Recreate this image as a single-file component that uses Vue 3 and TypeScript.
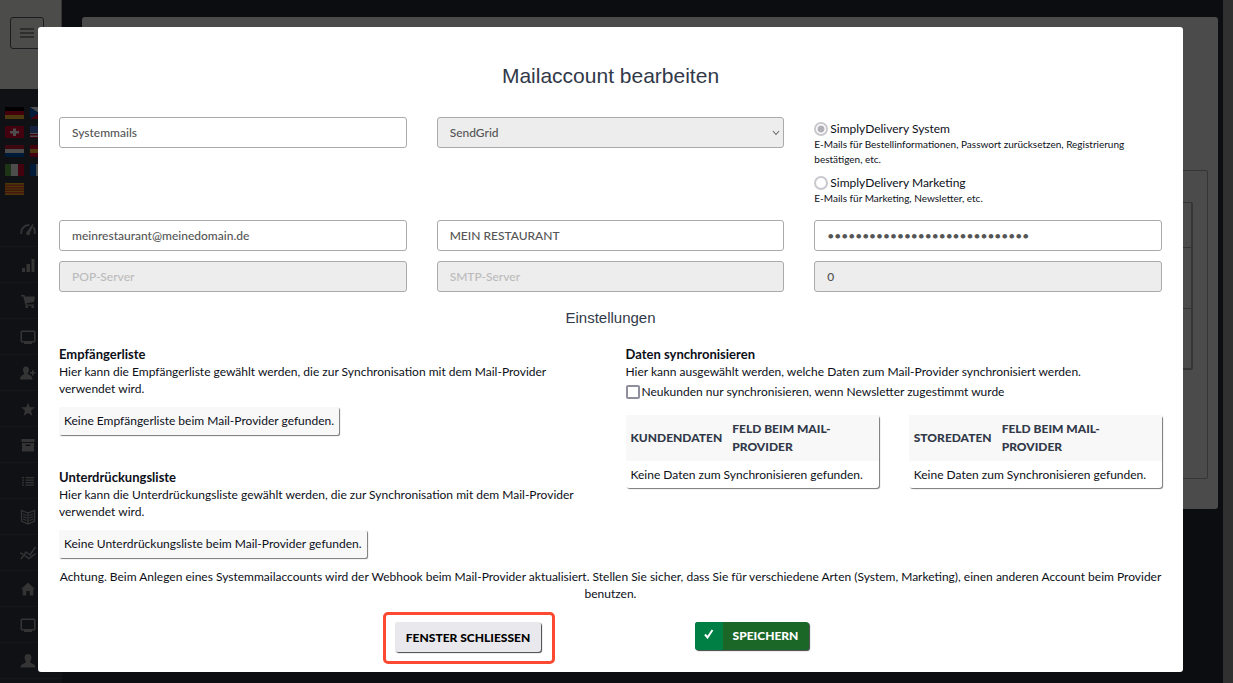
<script setup lang="ts">
import { ref } from 'vue'

interface Row { height: number }

const name = ref('Systemmails')
const provider = ref('SendGrid')
const kind = ref('system')
const email = ref('meinrestaurant@meinedomain.de')
const sender = ref('MEIN RESTAURANT')
const password = ref('x'.repeat(29))
const port = ref('0')
const onlyNewsletter = ref(false)

const kinds = [
  { id: 'system', label: 'SimplyDelivery System', hint: 'E-Mails für Bestellinformationen, Passwort zurücksetzen, Registrierung bestätigen, etc.' },
  { id: 'marketing', label: 'SimplyDelivery Marketing', hint: 'E-Mails für Marketing, Newsletter, etc.' },
]

const lists = [
  {
    title: 'Empfängerliste',
    text: 'Hier kann die Empfängerliste gewählt werden, die zur Synchronisation mit dem Mail-Provider verwendet wird.',
    empty: 'Keine Empfängerliste beim Mail-Provider gefunden.',
  },
  {
    title: 'Unterdrückungsliste',
    text: 'Hier kann die Unterdrückungsliste gewählt werden, die zur Synchronisation mit dem Mail-Provider verwendet wird.',
    empty: 'Keine Unterdrückungsliste beim Mail-Provider gefunden.',
  },
]

const tables = ['Kundendaten', 'Storedaten']
const rows: Row[] = [{ height: 44 }, { height: 61 }, { height: 60 }]
const nav = ['gauge', 'bars', 'cart', 'screen', 'adduser', 'star', 'archive', 'list', 'book', 'chart', 'home', 'screen', 'user']
const flags = ['de', 'cz', 'ch', 'us', 'nl', 'es', 'it', 'fr', 'ct']
</script>

<template>
  <div class="app">
    <aside class="sidebar">
      <div class="brand">
        <button class="burger" type="button" aria-label="Menü"><i></i><i></i><i></i></button>
      </div>
      <div class="flags">
        <svg v-for="f in flags" :key="f" class="flag" viewBox="0 0 19 12" preserveAspectRatio="none">
          <template v-if="f === 'de'">
            <path fill="#000" d="M0 0h19v4H0z" /><path fill="#43000a" d="M0 4h19v4H0z" /><path fill="#4d3a10" d="M0 8h19v4H0z" />
          </template>
          <template v-else-if="f === 'cz'">
            <path fill="#4d4d4d" d="M0 0h19v6H0z" /><path fill="#43000f" d="M0 6h19v6H0z" /><path fill="#001a3a" d="M0 0l9 6-9 6z" />
          </template>
          <template v-else-if="f === 'ch'">
            <path fill="#43000f" d="M0 0h19v12H0z" /><path fill="#4d4d4d" d="M8 2.500h3V5h3v2.500h-3V10H8V7.500H5V5h3z" />
          </template>
          <template v-else-if="f === 'us'">
            <path fill="#4d4d4d" d="M0 0h19v12H0z" /><path fill="#3d000f" d="M0 0h19v2H0zM0 4h19v2H0zM0 8h19v1.500H0zM0 11h19v1H0z" /><path fill="#16203f" d="M0 0h9v7H0z" />
          </template>
          <template v-else-if="f === 'nl'">
            <path fill="#3d0810" d="M0 0h19v4H0z" /><path fill="#4d4d4d" d="M0 4h19v4H0z" /><path fill="#001a3a" d="M0 8h19v4H0z" />
          </template>
          <template v-else-if="f === 'es'">
            <path fill="#43000f" d="M0 0h19v12H0z" /><path fill="#4d3a10" d="M0 4h19v4H0z" />
          </template>
          <template v-else-if="f === 'it'">
            <path fill="#1d3516" d="M0 0h6v12H0z" /><path fill="#4d4d4d" d="M6 0h7v12H6z" /><path fill="#43000f" d="M13 0h6v12h-6z" />
          </template>
          <template v-else-if="f === 'fr'">
            <path fill="#001a3a" d="M0 0h6v12H0z" /><path fill="#4d4d4d" d="M6 0h7v12H6z" /><path fill="#43000f" d="M13 0h6v12h-6z" />
          </template>
          <template v-else>
            <path fill="#4d3608" d="M0 0h19v12H0z" /><path fill="#45180f" d="M0 1.500h19V3H0zM0 4h19v1.500H0zM0 6.500h19V8H0zM0 9h19v1.500H0z" />
          </template>
        </svg>
      </div>
      <nav class="nav">
        <a v-for="(n, i) in nav" :key="i" href="#" :aria-label="n">
          <svg viewBox="0 0 16 16" fill="#343434">
            <g v-if="n === 'gauge'"><path fill="none" stroke="#343434" stroke-width="1.800" d="M1.300 13c-.6-5 2.700-9 8-9.200M13.300 6c1.400 1.800 1.800 4.300 1.300 7" /><path d="M12.500 3l1 .5-3.600 8.700a1.900 1.900 0 1 1-3-1.400z" /></g>
            <path v-else-if="n === 'bars'" d="M2 11h3v4H2zM6.500 7h3.500v8H6.500zM11.500 2h3v13h-3z" />
            <path v-else-if="n === 'cart'" d="M1 2h3.500l.6 1.600H15l-1 5.400-7.500 1.200.3 1.200H14v1.400H5.500L3.300 3.500H1zM5.500 13h2.500v2H5.500zM11.500 13H14v2h-2.500z" />
            <path v-else-if="n === 'screen'" fill-rule="evenodd" d="M2 1.500h12a1.500 1.500 0 0 1 1.500 1.500v9a1.500 1.500 0 0 1-1.500 1.500h-2V15H4v-1.500H2A1.500 1.500 0 0 1 .5 12V3A1.500 1.500 0 0 1 2 1.500zM2 3v9h12V3z" />
            <path v-else-if="n === 'adduser'" d="M6 1.500c2.200 0 3 1.500 3 3.300S8 8 7.700 8.600c0 1.400 4.800 1.600 4.800 5.900H0c0-4.300 4.300-4.500 4.300-5.900C3.900 8 3 6.500 3 4.800s.8-3.300 3-3.300zM12 5h1.500v2h2v1.500h-2v2H12v-2h-2V7h2z" />
            <path v-else-if="n === 'star'" d="M8 1.500l1.800 4.800h5L11 9.500l1.300 5.200L8 12l-4.300 2.700L5 9.500 1.200 6.300h5z" />
            <path v-else-if="n === 'archive'" fill-rule="evenodd" d="M1.500 2h13v3h-13zM2 6h12v8.500H2zm3.500 1.500V9h5V7.500z" />
            <path v-else-if="n === 'list'" d="M2 4h2v1.300H2zM5.500 4H14v1.300H5.500zM2 6.500h2v1.300H2zM5.500 6.500H14v1.300H5.500zM2 9h2v1.300H2zM5.500 9H14v1.300H5.500zM2 11.500h2v1.300H2zM5.500 11.500H14v1.300H5.500z" />
            <g v-else-if="n === 'book'" fill="none" stroke="#343434" stroke-width="1.300"><path d="M8 4L1.500 1.500v10.500L8 15l6.500-3V1.500zM8 4v11M3 5l3.500 1.500M3 7.500L6.500 9M3 10l3.500 1.500M13 5L9.500 6.500M13 7.500L9.500 9M13 10l-3.500 1.500" /></g>
            <g v-else-if="n === 'chart'" fill="none" stroke="#343434" stroke-width="1.500"><path d="M1 14l5-7 4 3 5.500-8M0 8l3 1M4.500 10.500L9 13.500l6.500-5" /></g>
            <path v-else-if="n === 'home'" d="M8 1.500l7 6.800h-1.700V14.500H9.700V10H6.300v4.500H2.700V8.300H1z" />
            <path v-else d="M8 1c2.600 0 3.400 1.700 3.400 3.700S10.500 8 10 8.800c0 1.800 5.500 1.500 5.500 5.700H.5C.5 10.300 6 10.600 6 8.800 5.500 8 4.600 6.700 4.600 4.700S5.400 1 8 1z" />
          </svg>
        </a>
      </nav>
    </aside>
    <main class="page">
      <div class="card">
        <div class="panel">
          <div class="grid">
            <div v-for="(r, i) in rows" :key="i" class="line" :style="{ height: r.height + 'px' }"></div>
          </div>
        </div>
      </div>
    </main>
    <div class="rail"></div>

    <div class="overlay">
      <form class="modal" role="dialog" aria-labelledby="dlg-title" @submit.prevent>
        <h1 id="dlg-title">Mailaccount bearbeiten</h1>

        <div class="fields">
          <input v-model="name" type="text" aria-label="Name">
          <div class="select">
            <select v-model="provider" disabled aria-label="Provider"><option>SendGrid</option></select>
            <svg viewBox="0 0 8 6" fill="none" stroke="#666" stroke-width="1.100"><path d="M1 1l3 3.500L7 1" /></svg>
          </div>
          <div class="kinds">
            <div v-for="k in kinds" :key="k.id" class="kind">
              <label><input v-model="kind" type="radio" name="kind" :value="k.id">{{ k.label }}</label>
              <small>{{ k.hint }}</small>
            </div>
          </div>
          <input v-model="email" type="text" aria-label="E-Mail">
          <input v-model="sender" type="text" aria-label="Absender">
          <input v-model="password" type="password" aria-label="Passwort">
          <input type="text" placeholder="POP-Server" disabled aria-label="POP-Server">
          <input type="text" placeholder="SMTP-Server" disabled aria-label="SMTP-Server">
          <input v-model="port" type="text" disabled aria-label="Port">
        </div>

        <h2>Einstellungen</h2>

        <div class="settings">
          <div class="lists">
            <section v-for="l in lists" :key="l.title">
              <h3>{{ l.title }}</h3>
              <p>{{ l.text }}</p>
              <div class="empty">{{ l.empty }}</div>
            </section>
          </div>
          <section>
            <h3>Daten synchronisieren</h3>
            <p>Hier kann ausgewählt werden, welche Daten zum Mail-Provider synchronisiert werden.</p>
            <label class="check"><input v-model="onlyNewsletter" type="checkbox">Neukunden nur synchronisieren, wenn Newsletter zugestimmt wurde</label>
            <div class="tables">
              <table v-for="t in tables" :key="t">
                <thead><tr><th>{{ t }}</th><th class="wide">Feld beim Mail-Provider</th></tr></thead>
                <tbody><tr><td colspan="2">Keine Daten zum Synchronisieren gefunden.</td></tr></tbody>
              </table>
            </div>
          </section>
        </div>

        <p class="warning">Achtung. Beim Anlegen eines Systemmailaccounts wird der Webhook beim Mail-Provider aktualisiert. Stellen Sie sicher, dass Sie für verschiedene Arten (System, Marketing), einen anderen Account beim Provider benutzen.</p>

        <div class="actions">
          <div class="slot"><div class="marked"><button class="close" type="button">Fenster schliessen</button></div></div>
          <div class="slot">
            <button class="save" type="submit">
              <span class="tick"><svg viewBox="0 0 10 10" fill="none" stroke="#fff" stroke-width="2"><path d="M1 5.500l2.500 3L8.500 1" /></svg></span>
              <span class="text">Speichern</span>
            </button>
          </div>
        </div>
      </form>
    </div>
  </div>
</template>

<style>
body { background: #0c0d11; }
</style>

<style scoped>
* { box-sizing: border-box; }
.app {
  position: relative;
  display: flex;
  min-height: 100vh;
  overflow: hidden;
  background: #0c0d11;
  color: #0c0f18;
  font: 12px/17px Lato, "Liberation Sans", sans-serif;
}
.sidebar { width: 62px; flex: none; background: #101115; }
.brand { height: 89px; padding: 17px 10px; background: #4c4c4b; border-right: 1px solid #353535; }
.burger {
  display: flex; flex-direction: column; align-items: center; justify-content: center; gap: 2px;
  width: 34px; height: 32px; padding: 0; background: none; border: 1px solid #1c1d20; border-radius: 3px;
}
.burger i { width: 14px; height: 2px; background: #2e2e2e; }
.flags { display: grid; grid-template-columns: 19px 19px; gap: 7px 6px; padding: 18px 5px 16px; }
.flag { width: 19px; height: 12px; display: block; }
.nav a { display: flex; justify-content: center; align-items: center; height: 36px; padding-right: 7px; border-bottom: 1px solid #15171b; }
.nav svg { width: 16px; height: 16px; }
.page { flex: 1; padding: 17px 5px 0 20px; }
.card { height: 492px; padding: 153px 10px 0; background: #4b4b4b; border-radius: 3px; }
.panel { height: 309px; padding: 31px 14px; border: 1px solid #353535; border-radius: 2px; }
.grid { border: 1px solid #353535; border-right-width: 2px; border-bottom-width: 2px; border-radius: 2px; }
.line + .line { border-top: 1px solid #353535; }
.rail { width: 10px; background: #303030; }

.overlay { position: absolute; inset: 0; padding: 27px 50px 11px 38px; }
.modal { padding: 37px 21px 8px; background: #fff; border-radius: 3px; }
h1, h2 { margin: 0; text-align: center; font-family: "Liberation Sans", Arial, sans-serif; font-weight: 400; color: #313949; }
h1 { font-size: 21px; line-height: 24px; margin-bottom: 29px; }
h2 { font-size: 15px; line-height: 18px; margin: 17px 0 19px; }

.fields { display: grid; grid-template-columns: repeat(3, minmax(0, 1fr)); gap: 10px 30px; align-items: start; }
.fields input:not([type='radio']), select {
  display: block; width: 100%; height: 31px; padding: 0 12px; margin: 0;
  border: 1px solid #aaa; border-radius: 3px; background: #fff; color: #555;
  font: 12px/17px Lato, "Liberation Sans", sans-serif; font-weight: 500; opacity: 1;
}
.fields input:disabled, select:disabled { background: #ededed; color: #555; }
.fields input::placeholder { color: #bbb; }
.select { display: grid; align-items: center; }
.select > * { grid-area: 1 / 1; }
select { appearance: none; }
.select svg { width: 8px; height: 6px; justify-self: end; margin-right: 4px; pointer-events: none; }
.kinds { display: grid; gap: 7px; padding: 3px 0 4px; }
.kind label { display: flex; align-items: center; gap: 2px; }
.kind small { display: block; font-size: 10px; line-height: 15px; }
.kind input {
  appearance: none; width: 14px; height: 14px; margin: 0; border: 2px solid #c9c8ce; border-radius: 50%; background: #fff;
}
.kind input:checked { background: radial-gradient(circle, #b1b0b8 0 3px, #fff 4px); }

.settings { display: grid; grid-template-columns: repeat(2, minmax(0, 1fr)); gap: 30px; }
.lists { display: grid; gap: 34px; }
h3 { margin: 0; font-size: 13px; line-height: 17px; font-weight: 700; }
p { margin: 0; }
.empty {
  display: inline-block; vertical-align: top; margin-top: 10px; padding: 5px 5px 6px; background: #f8f8f8;
  border-radius: 2px; box-shadow: 1px 1px 1px #777;
}
.check { display: flex; align-items: center; gap: 2px; margin-top: 3px; }
.check input { appearance: none; width: 14px; height: 14px; margin: 0; border: 2px solid #8f8f9d; border-radius: 2px; background: #fff; }
.tables { display: grid; grid-template-columns: repeat(2, minmax(0, 1fr)); gap: 30px; margin-top: 15px; }
table { width: 100%; border-collapse: collapse; border-radius: 3px; box-shadow: 1px 1px 1px #777; }
th, td { padding: 5px; text-align: left; }
th { background: #f8f8f8; color: #313949; font-size: 12px; line-height: 18px; font-weight: 900; text-transform: uppercase; }
th.wide { width: 100%; }
.warning { margin-top: 10px; text-align: center; }

.actions { display: flex; justify-content: center; margin-top: 10px; }
.slot { flex: 0 0 283px; display: flex; justify-content: center; align-items: flex-start; }
.marked { padding: 7px 11px 9px 9px; border: 3px solid #fb4a31; border-radius: 5px; }
button { font: 900 12px/17px Lato, "Liberation Sans", sans-serif; text-transform: uppercase; }
.close { display: block; height: 30px; padding: 0 11px; border: 0; border-radius: 3px; background: #e9e9ed; color: #000; box-shadow: 1px 1px 1px #444; }
.save { display: flex; height: 28px; margin-top: 10px; padding: 0; overflow: hidden; border: 0; border-radius: 3px; background: #1b6728; color: #fff; box-shadow: 1px 1px 1px #444; }
.tick { display: flex; justify-content: center; padding-top: 7px; width: 28px; height: 28px; background: #007f44; }
.tick svg { width: 10px; height: 10px; }
.save .text { padding: 5px 11px 6px 10px; }
</style>
